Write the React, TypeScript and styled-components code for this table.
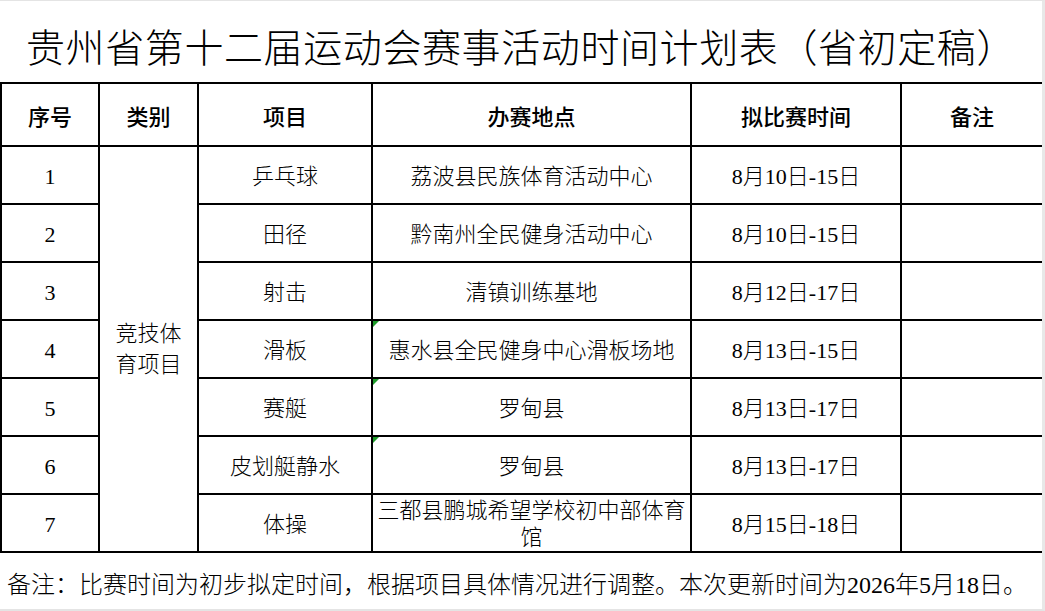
import React from 'react'
import styled, { createGlobalStyle } from 'styled-components'

const GlobalStyle = createGlobalStyle`
    html, body {
        margin: 0;
        padding: 0;
        background: #fff;
    }
    body {
        font-family: "Liberation Serif", "Noto Sans CJK SC", serif;
        color: #000;
    }
`

const Sheet = styled.div`
    width: 1045px;
    height: 611px;
    box-sizing: border-box;
    border-top: 1px solid #e4e4e4;
    border-right: 3px solid #e8e8e8;
    border-bottom: 2px solid #e4e4e4;
    display: flex;
    flex-direction: column;
    overflow: hidden;
`

const Title = styled.h1`
    margin: 0;
    height: 81px;
    display: flex;
    align-items: center;
    justify-content: center;
    padding-top: 6px;
    box-sizing: border-box;
    font-family: "Noto Sans CJK SC", sans-serif;
    font-weight: 300;
    font-size: 39px;
    letter-spacing: 0.6px;
    white-space: nowrap;
`

const Table = styled.table`
    border-collapse: collapse;
    table-layout: fixed;
    width: 1043px;
`

const HeadCell = styled.th`
    border: 2px solid #000;
    height: 61px;
    padding: 0;
    font-family: "Noto Sans CJK SC", sans-serif;
    font-weight: 500;
    font-size: 22px;
    text-align: center;
    vertical-align: middle;
`

const Cell = styled.td<{ $flag?: boolean }>`
    border: 2px solid #000;
    height: 54px;
    padding: 2px 2px 0;
    font-family: "Liberation Serif", "Noto Sans CJK SC", serif;
    font-weight: 300;
    font-size: 22px;
    line-height: 27px;
    text-align: center;
    vertical-align: middle;
    position: relative;

    &::before {
        content: '';
        display: ${p => (p.$flag ? 'block' : 'none')};
        position: absolute;
        top: 0;
        left: 0;
        width: 0;
        height: 0;
        border-top: 6px solid #1e9b2a;
        border-right: 6px solid transparent;
    }
`

const GroupCell = styled(Cell)`
    line-height: 31px;
    padding: 0 14px;
`

const Note = styled.div`
    flex: 1;
    display: flex;
    align-items: center;
    padding: 2px 0 0 7px;
    font-family: "Liberation Serif", "Noto Sans CJK SC", serif;
    font-weight: 300;
    font-size: 24px;
    white-space: nowrap;
`

type Row = {
    no: number
    item: string
    place: string
    time: string
    flag?: boolean
}

const rows: Row[] = [
    { no: 1, item: '乒乓球', place: '荔波县民族体育活动中心', time: '8月10日-15日' },
    { no: 2, item: '田径', place: '黔南州全民健身活动中心', time: '8月10日-15日' },
    { no: 3, item: '射击', place: '清镇训练基地', time: '8月12日-17日' },
    { no: 4, item: '滑板', place: '惠水县全民健身中心滑板场地', time: '8月13日-15日', flag: true },
    { no: 5, item: '赛艇', place: '罗甸县', time: '8月13日-17日', flag: true },
    { no: 6, item: '皮划艇静水', place: '罗甸县', time: '8月13日-17日', flag: true },
    { no: 7, item: '体操', place: '三都县鹏城希望学校初中部体育馆', time: '8月15日-18日' },
]

const widths = [98, 99, 174, 319, 210, 142]
const heads = ['序号', '类别', '项目', '办赛地点', '拟比赛时间', '备注']

export default function App() {
    return (
        <>
            <GlobalStyle />
            <Sheet>
                <Title>贵州省第十二届运动会赛事活动时间计划表（省初定稿）</Title>
                <Table>
                    <colgroup>
                        {widths.map((w, i) => (
                            <col key={i} style={{ width: w }} />
                        ))}
                    </colgroup>
                    <thead>
                        <tr>
                            {heads.map(h => (
                                <HeadCell key={h}>{h}</HeadCell>
                            ))}
                        </tr>
                    </thead>
                    <tbody>
                        {rows.map((r, i) => (
                            <tr key={r.no}>
                                <Cell>{r.no}</Cell>
                                {i === 0 && (
                                    <GroupCell rowSpan={rows.length}>竞技体育项目</GroupCell>
                                )}
                                <Cell>{r.item}</Cell>
                                <Cell $flag={r.flag}>{r.place}</Cell>
                                <Cell>{r.time}</Cell>
                                <Cell />
                            </tr>
                        ))}
                    </tbody>
                </Table>
                <Note>备注：比赛时间为初步拟定时间，根据项目具体情况进行调整。本次更新时间为2026年5月18日。</Note>
            </Sheet>
        </>
    )
}
